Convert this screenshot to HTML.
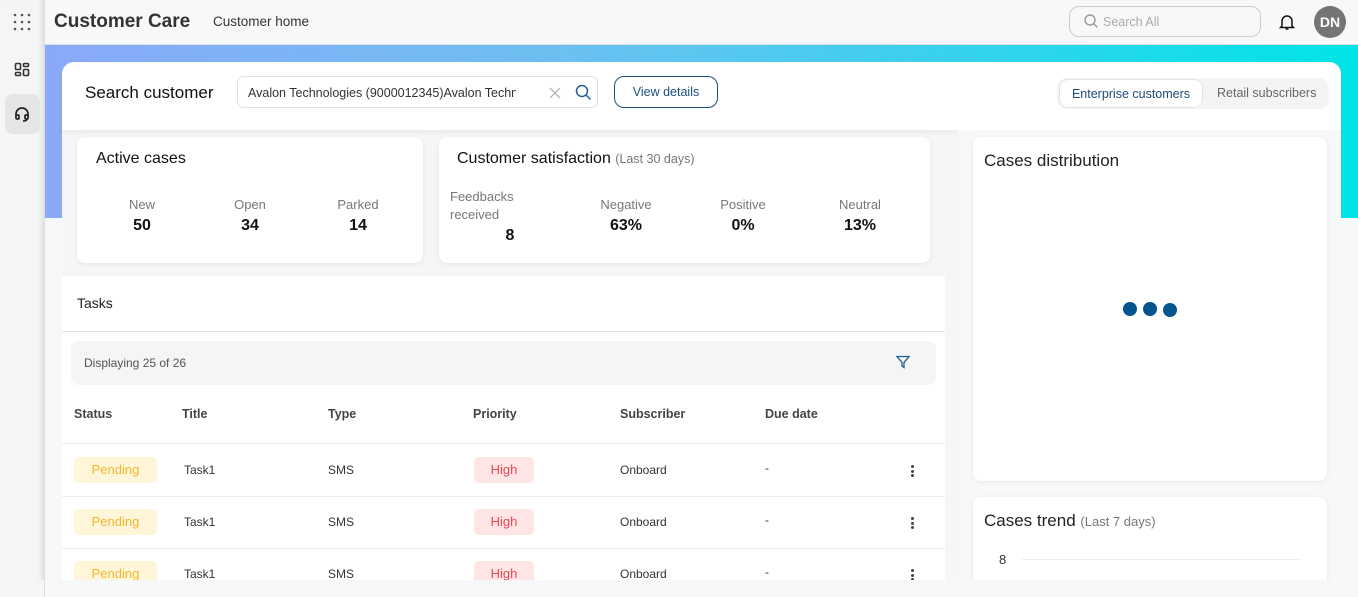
<!DOCTYPE html>
<html><head><meta charset="utf-8"><style>
*{box-sizing:border-box;margin:0;padding:0}
body{width:1358px;height:597px;overflow:hidden;background:#f7f8fa;font-family:"Liberation Sans",sans-serif;color:#222;position:relative}
.a{position:absolute}
.hdr{left:0;top:0;width:1358px;height:45px;background:#f7f8fa;border-bottom:1px solid #dcdde0}
.side{left:0;top:0;width:45px;height:597px;background:#f4f5f7;border-right:1px solid #dcdde0;box-shadow:inset -6px 0 8px -6px #ccc}
.grad{left:45px;top:45px;width:1313px;height:173px;background:linear-gradient(90deg,#8aa9f8 0%,#6cc0f2 40%,#00e4e8 100%)}
.panel{left:62px;top:62px;width:1279px;height:518px;background:#f6f6f6;border-radius:12px 12px 0 0;overflow:hidden}
.card{background:#fff;border-radius:8px;box-shadow:0 1px 6px rgba(0,0,0,.07)}
.lbl{color:#777;font-size:13px;text-align:center}
.num{font-weight:bold;font-size:16px;text-align:center;color:#111}
.th{font-size:12.5px;color:#444;font-weight:bold;top:407px}
.cell{font-size:12px;color:#333}
.pend{background:#fff6da;color:#f3b62a;border-radius:5px;width:83px;height:26px;font-size:13px;text-align:center;line-height:26px}
.high{background:#ffe5e6;color:#f0474f;border-radius:5px;width:60px;height:26px;font-size:13px;text-align:center;line-height:26px}
.sep{height:1px;background:#eee;left:62px;width:883px}
.dots{width:3px}
.dots i{display:block;width:3px;height:3px;background:#444;border-radius:50%;margin-bottom:1.5px}
</style></head><body>
<div class="a hdr"></div>
<div class="a side"></div>
<!-- grid icon -->
<svg class="a" style="left:12px;top:12px" width="20" height="20" viewBox="0 0 20 20" fill="#555"><circle cx="3" cy="3" r="1.3"/><circle cx="10" cy="3" r="1.3"/><circle cx="17" cy="3" r="1.3"/><circle cx="3" cy="10" r="1.3"/><circle cx="10" cy="10" r="1.3"/><circle cx="17" cy="10" r="1.3"/><circle cx="3" cy="17" r="1.3"/><circle cx="10" cy="17" r="1.3"/><circle cx="17" cy="17" r="1.3"/></svg>
<svg class="a" style="left:14px;top:62px" width="16" height="16" viewBox="0 0 16 16" fill="none" stroke="#333" stroke-width="1.6"><rect x="1.5" y="1.5" width="5" height="6" rx="1"/><rect x="9.5" y="1.5" width="5" height="3" rx="1"/><rect x="1.5" y="10.5" width="5" height="3" rx="1"/><rect x="9.5" y="7.5" width="5" height="6" rx="1"/></svg>
<div class="a" style="left:5px;top:94px;width:35px;height:40px;background:#e4e5e7;border-radius:8px"></div>
<svg class="a" style="left:14px;top:106px" width="16" height="16" viewBox="0 0 16 16" fill="none" stroke="#222" stroke-width="1.7"><path d="M2 10V8a6 6 0 0 1 12 0v2"/><rect x="2" y="9" width="3" height="4" rx="1"/><rect x="11" y="9" width="3" height="4" rx="1"/><path d="M13 13q0 2-4 2"/></svg>
<div class="a" style="left:54px;top:11px;font-size:19px;font-weight:bold;color:#333">Customer Care</div>
<div class="a" style="left:213px;top:14px;font-size:13.5px;color:#333">Customer home</div>
<div class="a" style="left:1069px;top:6px;width:192px;height:31px;border:1px solid #ccc;border-radius:10px"></div>
<svg class="a" style="left:1083px;top:13px" width="16" height="16" viewBox="0 0 16 16" fill="none" stroke="#999" stroke-width="1.4"><circle cx="7" cy="7" r="5"/><path d="M10.5 10.5l4 4"/></svg>
<div class="a" style="left:1103px;top:15px;font-size:12.5px;color:#aaa">Search All</div>
<svg class="a" style="left:1279px;top:13px" width="16" height="18" viewBox="0 0 16 18" fill="none" stroke="#111" stroke-width="1.5"><path d="M3 13V8a5 5 0 0 1 10 0v5l1.5 1.5h-13z"/><path d="M6.5 16h3"/></svg>
<div class="a" style="left:1314px;top:6px;width:32px;height:32px;border-radius:50%;background:#757575;color:#fff;font-weight:bold;font-size:14px;text-align:center;line-height:32px">DN</div>

<div class="a grad"></div>
<div class="a panel"></div>
<div class="a" style="left:62px;top:62px;width:1279px;height:68px;background:#fff;border-radius:12px 12px 0 0;box-shadow:0 2px 5px rgba(0,0,0,.06)"></div>
<div class="a" style="left:85px;top:83px;font-size:17px;color:#111">Search customer</div>
<div class="a" style="left:237px;top:76px;width:361px;height:32px;border:1px solid #e2e2e2;border-radius:6px"></div>
<div class="a" style="left:248px;top:86px;font-size:12.5px;color:#333;width:268px;overflow:hidden;white-space:nowrap">Avalon Technologies (9000012345)Avalon Technologies</div>
<svg class="a" style="left:549px;top:87px" width="12" height="12" viewBox="0 0 12 12" stroke="#aaa" stroke-width="1.2"><path d="M1 1l10 10M11 1L1 11"/></svg>
<svg class="a" style="left:575px;top:84px" width="17" height="17" viewBox="0 0 17 17" fill="none" stroke="#1d5f96" stroke-width="1.5"><circle cx="7" cy="7" r="5.5"/><path d="M11 11l4.5 4.5"/></svg>
<div class="a" style="left:614px;top:76px;width:104px;height:32px;border:1.3px solid #1d5080;border-radius:10px;color:#1d5080;font-size:12.5px;text-align:center;line-height:30px">View details</div>
<div class="a" style="left:1057px;top:78px;width:272px;height:31px;background:#f4f4f4;border-radius:10px"></div>
<div class="a" style="left:1059px;top:79px;width:144px;height:29px;background:#fff;border:1px solid #dde6ef;border-radius:9px;color:#1d4a78;font-size:12.5px;text-align:center;line-height:28px">Enterprise customers</div>
<div class="a" style="left:1217px;top:86px;font-size:12.5px;color:#666">Retail subscribers</div>

<!-- active cases -->
<div class="a card" style="left:77px;top:137px;width:346px;height:126px"></div>
<div class="a" style="left:96px;top:150px;font-size:16px;color:#111">Active cases</div>
<div class="a lbl" style="left:102px;top:197px;width:80px">New</div>
<div class="a num" style="left:102px;top:217px;width:80px">50</div>
<div class="a lbl" style="left:210px;top:197px;width:80px">Open</div>
<div class="a num" style="left:210px;top:217px;width:80px">34</div>
<div class="a lbl" style="left:318px;top:197px;width:80px">Parked</div>
<div class="a num" style="left:318px;top:217px;width:80px">14</div>
<!-- satisfaction -->
<div class="a card" style="left:439px;top:137px;width:491px;height:126px"></div>
<div class="a" style="left:457px;top:150px;font-size:16px;color:#111">Customer satisfaction <span style="font-size:12.5px;color:#777">(Last 30 days)</span></div>
<div class="a" style="left:450px;top:188px;font-size:13px;color:#777;line-height:18px">Feedbacks<br>received</div>
<div class="a num" style="left:490px;top:227px;width:40px">8</div>
<div class="a lbl" style="left:586px;top:197px;width:80px">Negative</div>
<div class="a num" style="left:586px;top:217px;width:80px">63%</div>
<div class="a lbl" style="left:703px;top:197px;width:80px">Positive</div>
<div class="a num" style="left:703px;top:217px;width:80px">0%</div>
<div class="a lbl" style="left:820px;top:197px;width:80px">Neutral</div>
<div class="a num" style="left:820px;top:217px;width:80px">13%</div>

<!-- tasks -->
<div class="a" style="left:62px;top:276px;width:883px;height:304px;background:#fff"></div>
<div class="a" style="left:77px;top:295px;font-size:14px;color:#222">Tasks</div>
<div class="a sep" style="top:331px;background:#e4e4e4"></div>
<div class="a" style="left:71px;top:341px;width:865px;height:44px;background:#f5f5f5;border-radius:8px"></div>
<div class="a" style="left:84px;top:356px;font-size:12px;color:#555">Displaying 25 of 26</div>
<svg class="a" style="left:896px;top:355px" width="14" height="14" viewBox="0 0 14 14" fill="none" stroke="#1d5f96" stroke-width="1.3"><path d="M1 1.5h12L8 7.5V12.5L6 11V7.5z"/></svg>
<div class="a th" style="left:74px">Status</div>
<div class="a th" style="left:182px">Title</div>
<div class="a th" style="left:328px">Type</div>
<div class="a th" style="left:473px">Priority</div>
<div class="a th" style="left:620px">Subscriber</div>
<div class="a th" style="left:765px">Due date</div>
<div class="a sep" style="top:443px"></div>
<div class="a sep" style="top:496px"></div>
<div class="a sep" style="top:548px"></div>

<div class="a pend" style="left:74px;top:457px">Pending</div>
<div class="a cell" style="left:184px;top:463px">Task1</div>
<div class="a cell" style="left:328px;top:463px">SMS</div>
<div class="a high" style="left:474px;top:457px">High</div>
<div class="a cell" style="left:620px;top:463px">Onboard</div>
<div class="a cell" style="left:765px;top:461px">-</div>
<div class="a dots" style="left:911px;top:465px"><i></i><i></i><i></i></div>

<div class="a pend" style="left:74px;top:509px">Pending</div>
<div class="a cell" style="left:184px;top:515px">Task1</div>
<div class="a cell" style="left:328px;top:515px">SMS</div>
<div class="a high" style="left:474px;top:509px">High</div>
<div class="a cell" style="left:620px;top:515px">Onboard</div>
<div class="a cell" style="left:765px;top:513px">-</div>
<div class="a dots" style="left:911px;top:517px"><i></i><i></i><i></i></div>

<div class="a pend" style="left:74px;top:561px">Pending</div>
<div class="a cell" style="left:184px;top:567px">Task1</div>
<div class="a cell" style="left:328px;top:567px">SMS</div>
<div class="a high" style="left:474px;top:561px">High</div>
<div class="a cell" style="left:620px;top:567px">Onboard</div>
<div class="a cell" style="left:765px;top:565px">-</div>
<div class="a dots" style="left:911px;top:569px"><i></i><i></i><i></i></div>
<div class="a" style="left:0;top:580px;width:1358px;height:17px;background:#f7f8fa"></div>
<div class="a" style="left:0;top:580px;width:45px;height:17px;background:#f4f5f7;border-right:1px solid #dcdde0"></div>

<!-- right column -->
<div class="a" style="left:958px;top:130px;width:383px;height:450px;background:#f8f8f8"></div>
<div class="a card" style="left:973px;top:137px;width:354px;height:344px"></div>
<div class="a" style="left:984px;top:151px;font-size:17px;color:#222">Cases distribution</div>
<div class="a" style="left:1123px;top:302px;width:14px;height:14px;border-radius:50%;background:#02558f"></div>
<div class="a" style="left:1143px;top:302px;width:14px;height:14px;border-radius:50%;background:#02558f"></div>
<div class="a" style="left:1163px;top:303px;width:14px;height:14px;border-radius:50%;background:#02558f"></div>
<div class="a card" style="left:973px;top:497px;width:354px;height:90px;border-radius:8px 8px 0 0"></div>
<div class="a" style="left:984px;top:511px;font-size:17px;color:#222">Cases trend <span style="font-size:13px;color:#777">(Last 7 days)</span></div>
<div class="a" style="left:999px;top:552px;font-size:13px;color:#333">8</div>
<div class="a" style="left:1022px;top:559px;width:280px;height:1px;background:#eee"></div>
<div class="a" style="left:958px;top:580px;width:400px;height:17px;background:#f7f8fa"></div>
</body></html>
